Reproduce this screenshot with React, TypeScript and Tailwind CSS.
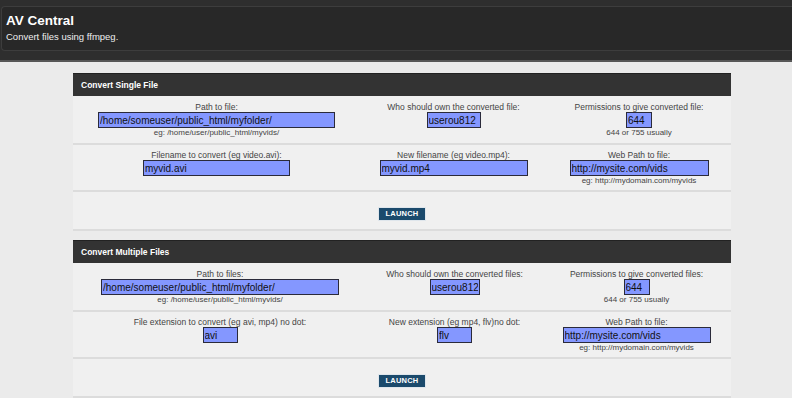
import React from "react";

type Field = {
  label: string;
  value: string;
  width: string;
  hint?: string;
};

type Section = {
  title: string;
  cols: string[];
  rows: Field[][];
};

const sections: Section[] = [
  {
    title: "Convert Single File",
    cols: ["w-[287px]", "w-[187px]", "w-[184px]"],
    rows: [
      [
        { label: "Path to file:", value: "/home/someuser/public_html/myfolder/", width: "w-[237px]", hint: "eg: /home/user/public_html/myvids/" },
        { label: "Who should own the converted file:", value: "userou812", width: "w-[54px]" },
        { label: "Permissions to give converted file:", value: "644", width: "w-[26px]", hint: "644 or 755 usually" },
      ],
      [
        { label: "Filename to convert (eg video.avi):", value: "myvid.avi", width: "w-[147px]" },
        { label: "New filename (eg video.mp4):", value: "myvid.mp4", width: "w-[148px]" },
        { label: "Web Path to file:", value: "http://mysite.com/vids", width: "w-[139px]", hint: "eg: http://mydomain.com/myvids" },
      ],
    ],
  },
  {
    title: "Convert Multiple Files",
    cols: ["w-[294px]", "w-[175px]", "w-[189px]"],
    rows: [
      [
        { label: "Path to files:", value: "/home/someuser/public_html/myfolder/", width: "w-[238px]", hint: "eg: /home/user/public_html/myvids/" },
        { label: "Who should own the converted files:", value: "userou812", width: "w-[50px]" },
        { label: "Permissions to give converted files:", value: "644", width: "w-[26px]", hint: "644 or 755 usually" },
      ],
      [
        { label: "File extension to convert (eg avi, mp4) no dot:", value: "avi", width: "w-[35px]" },
        { label: "New extension (eg mp4, flv)no dot:", value: "flv", width: "w-[35px]" },
        { label: "Web Path to file:", value: "http://mysite.com/vids", width: "w-[148px]", hint: "eg: http://mydomain.com/myvids" },
      ],
    ],
  },
];

function Cell({ field, col }: { field: Field; col: string }) {
  return (
    <div className={`${col} flex flex-col items-center`}>
      <span className="text-[8.5px] leading-[10px] text-[#444]">{field.label}</span>
      <input
        readOnly
        value={field.value}
        className={`${field.width} h-[16px] border border-[#2a2a3a] bg-[#8497ff] px-[1px] text-[10px] leading-[14px] text-[#111] outline-none`}
      />
      {field.hint && <span className="text-[8px] leading-[9px] text-[#444]">{field.hint}</span>}
    </div>
  );
}

function Panel({ section }: { section: Section }) {
  return (
    <div className="bg-[#f0f0f0]">
      <div className="flex h-[23px] items-center border-t border-[#222] bg-[#333] pl-[8px] text-[8.5px] font-bold text-white">
        {section.title}
      </div>
      {section.rows.map((row, i) => (
        <div
          key={i}
          className={`flex border-b-2 border-[#dcdcdc] ${i === 0 ? "h-[49px] pt-[6px]" : "h-[47px] pt-[5px]"}`}
        >
          {row.map((f, j) => (
            <Cell key={j} field={f} col={section.cols[j]} />
          ))}
        </div>
      ))}
      <div className="flex h-[39px] justify-center border-b-2 border-[#dcdcdc] pt-[15px]">
        <button className="h-[14px] w-[48px] border border-[#dfe6ec] bg-[#1b4a6c] text-[7.5px] font-bold leading-[12px] tracking-[0.2px] text-white">
          LAUNCH
        </button>
      </div>
    </div>
  );
}

export default function App() {
  return (
    <div className="min-h-[398px] bg-[#ebebeb] font-['Liberation_Sans',Arial,sans-serif]">
      <div className="h-[62px] border-b-2 border-[#575757] bg-[#2e2e2e] pt-[6px] pl-[1px]">
        <div className="h-[45px] rounded-l-[4px] border border-r-0 border-[#3d3d3d] bg-[#282828] pl-[4px] pt-[5px]">
          <h1 className="text-[13.5px] font-bold leading-[18px] text-white">AV Central</h1>
          <p className="text-[9.5px] leading-[14px] text-[#eee]">Convert files using ffmpeg.</p>
        </div>
      </div>
      <div className="mt-[11px] ml-[73px] flex w-[658px] flex-col gap-[9px]">
        {sections.map((s) => (
          <Panel key={s.title} section={s} />
        ))}
      </div>
    </div>
  );
}
